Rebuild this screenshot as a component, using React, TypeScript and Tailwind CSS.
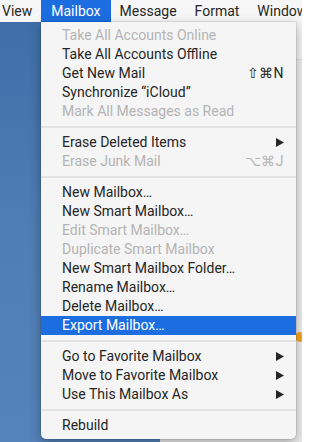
type Item =
  | { sep: true }
  | { sep?: false; label: string; disabled?: boolean; shortcut?: string; sub?: boolean; active?: boolean }

const items: Item[] = [
  { label: 'Take All Accounts Online', disabled: true },
  { label: 'Take All Accounts Offline' },
  { label: 'Get New Mail', shortcut: '⇧⌘N' },
  { label: 'Synchronize “iCloud”' },
  { label: 'Mark All Messages as Read', disabled: true },
  { sep: true },
  { label: 'Erase Deleted Items', sub: true },
  { label: 'Erase Junk Mail', disabled: true, shortcut: '⌥⌘J' },
  { sep: true },
  { label: 'New Mailbox…' },
  { label: 'New Smart Mailbox…' },
  { label: 'Edit Smart Mailbox…', disabled: true },
  { label: 'Duplicate Smart Mailbox', disabled: true },
  { label: 'New Smart Mailbox Folder…' },
  { label: 'Rename Mailbox…' },
  { label: 'Delete Mailbox…' },
  { label: 'Export Mailbox…', active: true },
  { sep: true },
  { label: 'Go to Favorite Mailbox', sub: true },
  { label: 'Move to Favorite Mailbox', sub: true },
  { label: 'Use This Mailbox As', sub: true },
  { sep: true },
  { label: 'Rebuild' },
]

const Arrow = () => (
  <svg width="8" height="9" viewBox="0 0 8 9" className="fill-current">
    <path d="M0 0 L8 4.5 L0 9 Z" />
  </svg>
)

export default function App() {
  return (
    <div
      className="relative h-[442px] w-[302px] overflow-hidden bg-[#4f7db5]"
      style={{ fontFamily: 'Roboto, "Liberation Sans", sans-serif' }}
    >
      <div className="flex h-[22px] items-center bg-[#f6f6f6] text-[14px] text-[#262626]">
        <span className="pl-[2px] pr-[9px]">View</span>
        <span className="flex h-full items-center bg-[#1b6de0] px-[10px] text-white">Mailbox</span>
        <span className="px-[9px]">Message</span>
        <span className="px-[9px]">Format</span>
        <span className="px-[9px] whitespace-nowrap">Window</span>
      </div>

      <div className="flex h-[420px]">
        <div className="w-[160px] bg-gradient-to-b from-[#3f6ea8] via-[#4f7db5] to-[#5482ba]" />
        <div className="flex flex-1 flex-col bg-[#ececec]">
          <div className="h-[38px] border-b border-[#d6d6d6] bg-[#f3f3f3]" />
          <div className="flex-1" />
        </div>
      </div>

      <div className="absolute left-[295px] top-[332px] h-[10px] w-[10px] rounded-full bg-[#f5a623]" />

      <div className="absolute left-[41px] top-[22px] w-[255px] rounded-b-[5px] bg-[#f5f5f5] pt-[4px] pb-[4px] text-[14px] shadow-[0_4px_12px_rgba(0,0,0,0.3),0_0_0_0.5px_rgba(0,0,0,0.15)]">
        {items.map((it, i) =>
          it.sep ? (
            <div key={i} className="flex h-[12px] items-center">
              <div className="h-[2px] w-full bg-[#e3e3e3]" />
            </div>
          ) : (
            <div
              key={i}
              className={`flex h-[19px] items-center justify-between pl-[21px] pr-[12px] ${
                it.active ? 'bg-[#1b6de0] text-white' : it.disabled ? 'text-[#b4b4b4]' : 'text-[#262626]'
              }`}
            >
              <span className="whitespace-nowrap">{it.label}</span>
              {it.shortcut && <span className="tracking-[0.5px]">{it.shortcut}</span>}
              {it.sub && <Arrow />}
            </div>
          )
        )}
      </div>
    </div>
  )
}
